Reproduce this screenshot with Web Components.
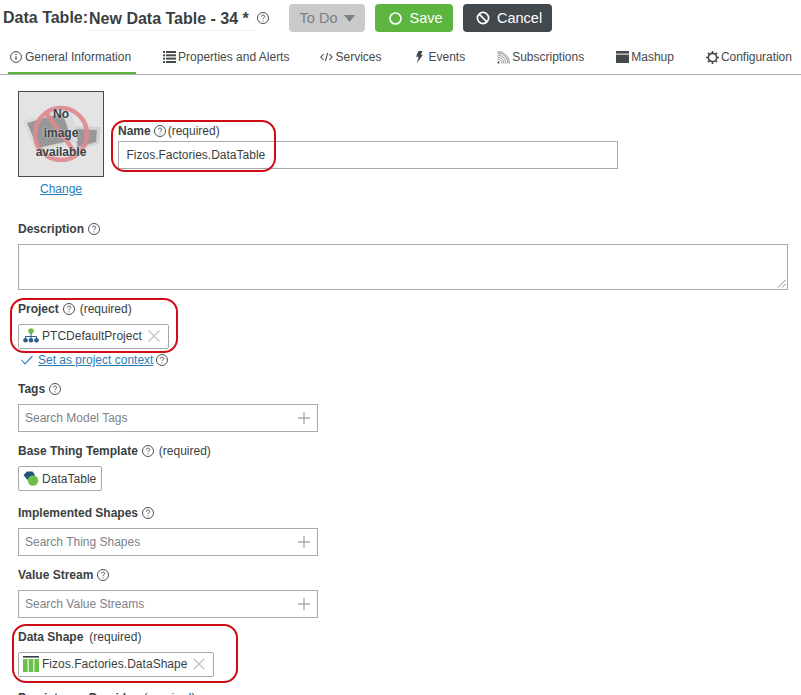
<!DOCTYPE html>
<html><head><meta charset="utf-8"><title>Data Table</title>
<style>
html,body{margin:0;padding:0;background:#fff;height:695px;overflow:hidden}
body{font:12px "Liberation Sans",Arial,sans-serif;color:#3a3f42}
</style></head><body>
<template id="t-help"><style>:host{display:inline-flex;vertical-align:middle}svg{display:block}</style>
<svg width="12" height="12" viewBox="0 0 12 12" fill="none" stroke="#4d5154" stroke-width="1"><circle cx="6" cy="6" r="5.500"/><path d="M4.300 4.600C4.400 3.600 5.100 3.100 6 3.100c1 0 1.700.6 1.700 1.400 0 .7-.4 1-1 1.400-.5.3-.7.6-.7 1.200"/><circle cx="6" cy="8.800" r=".6" fill="#4d5154" stroke="none"/></svg></template>

<x-page></x-page>

<script>
function def(name, html){
  customElements.define(name, class extends HTMLElement{
    constructor(){super();this.attachShadow({mode:'open'});}
    connectedCallback(){ if(this.shadowRoot.childNodes.length) return;
      this.shadowRoot.innerHTML = typeof html==='function'?html(this):html; }
  });
}
const ICONS={
 info:'<svg width="12" height="12" viewBox="0 0 12 12" fill="none" stroke="#44494c"><circle cx="6" cy="6" r="5.400"/><path d="M6 5.200v3.600" stroke-width="1.200"/><circle cx="6" cy="3.500" r=".7" fill="#44494c" stroke="none"/></svg>',
 list:'<svg width="13" height="12" viewBox="0 0 13 12" fill="#44494c"><rect x="0" y="0" width="2" height="2"/><rect x="3" y="0" width="10" height="2"/><rect x="0" y="3.300" width="2" height="2"/><rect x="3" y="3.300" width="10" height="2"/><rect x="0" y="6.600" width="2" height="2"/><rect x="3" y="6.600" width="10" height="2"/><rect x="0" y="10" width="2" height="2"/><rect x="3" y="10" width="10" height="2"/></svg>',
 code:'<svg width="13" height="10" viewBox="0 0 13 10" fill="none" stroke="#44494c" stroke-width="1.100"><path d="M3.600 2 .9 5l2.700 3M9.400 2l2.700 3-2.700 3M7.600 .8 5.400 9.200"/></svg>',
 bolt:'<svg width="7" height="12" viewBox="0 0 7 12" fill="#44494c"><path d="M2.400 0H6.600L4.800 3.800H7L1 12l1.600-6.200H0z"/></svg>',
 rss:'<svg width="13" height="13" viewBox="0 0 13 13" fill="none" stroke="#777" stroke-width=".8"><rect x=".5" y="10.500" width="2" height="2" fill="#555" stroke="none"/><path d="M.5 8a4.500 4.500 0 0 1 4.500 4.500M.5 6a6.500 6.500 0 0 1 6.500 6.500M.5 4a8.500 8.500 0 0 1 8.500 8.500M.5 2a10.500 10.500 0 0 1 10.500 10.500M.5 .5a12 12 0 0 1 12 12"/></svg>',
 mash:'<svg width="13" height="12" viewBox="0 0 13 12" fill="#44494c"><rect width="13" height="2.600"/><rect y="3.600" width="13" height="8.400"/></svg>',
 gear:'<svg width="13" height="13" viewBox="0 0 13 13" fill="none" stroke="#44494c"><circle cx="6.500" cy="6.500" r="4.200" stroke-width="1.700"/><path d="M6.500 0v2M6.500 11v2M0 6.500h2M11 6.500h2M1.900 1.900l1.400 1.400M9.700 9.700l1.400 1.400M1.900 11.100l1.400-1.400M9.700 3.300l1.400-1.400" stroke-width="1.600"/></svg>',
 project:'<svg width="16" height="15" viewBox="0 0 16 15"><circle cx="8" cy="3" r="2.800" fill="#6cc04a"/><path d="M8 5v3M2.500 11V8.500h11V11M8 8v3" fill="none" stroke="#2c5f8a"/><circle cx="2.500" cy="12.300" r="2.300" fill="#2c5f8a"/><circle cx="8" cy="12.300" r="2.300" fill="#2c5f8a"/><circle cx="13.500" cy="12.300" r="2.300" fill="#2c5f8a"/></svg>',
 table:'<svg width="16" height="15" viewBox="0 0 16 15"><path d="M4 .5h5.500L12 4 9 9 4 8.500 .5 4z" fill="#23527c"/><circle cx="10" cy="9.500" r="5.200" fill="#6cc04a"/></svg>',
 shape:'<svg width="16" height="16" viewBox="0 0 16 16"><rect width="16" height="1.600" fill="#3a3f42"/><rect y="3" width="4.600" height="13" fill="#6cc04a"/><rect x="5.700" y="3" width="4.600" height="13" fill="#6cc04a"/><rect x="11.400" y="3" width="4.600" height="13" fill="#6cc04a"/></svg>'
};
def('x-help', ()=>document.getElementById('t-help').innerHTML);
def('x-icon', h=>`<style>:host{display:inline-flex;align-items:center}svg{display:block}</style>${ICONS[h.getAttribute('name')]}`);

def('x-btn', h=>`<style>:host{display:inline-flex;align-items:center;justify-content:center;height:28px;box-sizing:border-box;border-radius:4px;font-size:14.500px;gap:var(--g,8px);width:var(--w);padding-left:var(--p,0);background:var(--bg);color:var(--fg)}</style><slot name="i"></slot><slot></slot>`);

def('x-header', `<style>:host{display:flex;align-items:center;height:28px;padding:4px 0 0 3px}
.k{font-size:16px;font-weight:700;color:#3a3f42}
.v{font-size:16px;font-weight:700;color:#3a3f42;width:167px;margin-left:1px;height:26px;line-height:28px;box-sizing:border-box;border-bottom:1px solid #eee;white-space:nowrap}
x-help{margin-left:1px}
.b{display:flex;gap:10px;margin-left:20px}
</style><span class="k">Data Table:</span><span class="v">New Data Table - 34 *</span><x-help></x-help>
<div class="b">
<x-btn style="--w:76px;--bg:#cacaca;--fg:#7c7f81;--g:6px">To Do<svg slot="i" style="order:2" width="11" height="7" viewBox="0 0 11 7" fill="#7c7f81"><path d="M0 0h11L5.500 7z"/></svg></x-btn>
<x-btn style="--w:78px;--bg:#5bb53e;--fg:#fff;--p:3px"><svg slot="i" width="13" height="13" viewBox="0 0 13 13" fill="none" stroke="#fff" stroke-width="1.700"><circle cx="6.500" cy="6.500" r="5.500"/></svg>Save</x-btn>
<x-btn style="--w:89px;--bg:#42484c;--fg:#fff;--p:3px;--g:7px"><svg slot="i" width="14" height="14" viewBox="0 0 15 15" fill="none" stroke="#fff" stroke-width="1.800"><circle cx="7.500" cy="7.500" r="6"/><path d="M3.400 3.400l8.200 8.200"/></svg>Cancel</x-btn>
</div>`);

def('x-tab', h=>`<style>:host{display:flex;align-items:center;gap:var(--g,3px);height:32px;box-sizing:border-box;padding:0 5px 2px 2px;font-size:12px;color:#44494c;white-space:nowrap;margin-left:var(--m,25px)}
:host([active]){box-shadow:inset 0 -2px 0 #5bb53e;margin-left:8px}</style><x-icon name="${h.getAttribute('icon')}"></x-icon><slot></slot>`);
def('x-tabs', `<style>:host{display:flex;margin-top:10px;height:32px;border-bottom:1px solid #a9a9a9;box-sizing:content-box;margin-bottom:0}</style><slot></slot>`);

def('x-noimage', `<style>:host{display:block;width:86px}
.box{position:relative;box-sizing:border-box;width:86px;height:86px;border:1px solid #4a4a4a;background:#e4e4e4;overflow:hidden}
svg{position:absolute;inset:0;filter:blur(.5px)}
.t{position:absolute;inset:0;display:flex;flex-direction:column;align-items:center;justify-content:center;font-weight:700;font-size:12px;line-height:19px;color:#3a3f42;text-shadow:0 0 2px #f4f4f4;padding-bottom:1px;box-sizing:border-box}
a{display:block;text-align:center;color:#2b7cb3;text-decoration:underline;font-size:12px;margin-top:5px;line-height:14px}
</style><div class="box"><svg width="84" height="84" viewBox="0 0 84 84">
<path d="M52 34 82 35 80 52 58 58z" fill="#d2d2d2"/><path d="M55 37 78 38 77 50 59 55z" fill="#989898"/>
<path d="M4 29 45 17 58 50 17 60z" fill="#dadada"/><path d="M8 31 43 21 54 48 19 56z" fill="#979797"/>
<path d="M46 24 53 22 59 49 52 50z" fill="#dadada"/>
<circle cx="42" cy="42" r="26" fill="none" stroke="#dd8b8e" stroke-width="4.500" opacity=".92"/><path d="M27 21 58 63" stroke="#dd8b8e" stroke-width="4.500" opacity=".92"/>
</svg><div class="t"><span>No</span><span>image</span><span>available</span></div></div><a>Change</a>`);

def('x-label', h=>`<style>:host{display:flex;align-items:center;height:16px;font-size:12px;line-height:16px;color:#3a3f42;gap:var(--g,4px);white-space:nowrap}
b{font-weight:700}.r{margin-left:var(--r,1px)}</style><b>${h.getAttribute('text')}</b>${h.hasAttribute('nohelp')?'':'<x-help></x-help>'}${h.hasAttribute('req')?'<span class="r">(required)</span>':''}`);

def('x-field', h=>`<style>:host{display:block;margin-top:var(--mt,11px)}x-label{margin-bottom:var(--lm,7px)}</style>
<x-label text="${h.getAttribute('label')}" ${h.hasAttribute('req')?'req':''} ${h.hasAttribute('nohelp')?'nohelp':''}></x-label><slot></slot>`);

def('x-input', h=>`<style>:host{display:flex;align-items:center;box-sizing:border-box;height:28px;width:var(--w,300px);border:1px solid #a9a9a9;padding:0 7px 0 6px;font-size:12px;background:#fff}
.ph{color:#7e8285;flex:1}.val{color:#3a3f42;flex:1;padding-left:1.500px}
svg{display:block}</style>${h.hasAttribute('placeholder')?`<span class="ph">${h.getAttribute('placeholder')}</span><svg width="12" height="12" viewBox="0 0 12 12" stroke="#a9a9a9" stroke-width="1.300"><path d="M6 0v12M0 6h12"/></svg>`:`<span class="val">${h.getAttribute('value')||''}</span>`}`);

def('x-textarea', `<style>:host{display:block;position:relative;box-sizing:border-box;height:46px;width:770px;border:1px solid #a9a9a9;background:#fff}
svg{position:absolute;right:1px;bottom:1px}</style><svg width="9" height="9" viewBox="0 0 9 9" stroke="#8a8a8a" fill="none"><path d="M8.500 1 1 8.500M8.500 5 5 8.500"/></svg>`);

def('x-chip', h=>`<style>:host{display:inline-flex;align-items:center;box-sizing:border-box;height:25px;border:1px solid #a9a9a9;border-radius:2px;padding:0 5px 0 4px;gap:3px;font-size:12px;color:#3a3f42;background:#fff;vertical-align:top;white-space:nowrap;letter-spacing:.03px}
:host([close]){padding-bottom:2px}
svg{display:block;margin:0 3px}</style><x-icon name="${h.getAttribute('icon')}"></x-icon><slot></slot>${h.hasAttribute('close')?'<svg width="12" height="12" viewBox="0 0 12 12" stroke="#c6c6c6" stroke-width="1.400"><path d="M.5 .5l11 11M11.500 .5l-11 11"/></svg>':''}`);

def('x-ring', `<style>:host{display:block;position:relative}
.r{position:absolute;top:var(--t);left:var(--l);width:var(--rw);height:var(--rh);box-sizing:border-box;border:2px solid #cf0d17;border-radius:14px;pointer-events:none}
</style><slot></slot><div class="r"></div>`);

def('x-context', `<style>:host{display:flex;align-items:center;height:14px;margin-top:4px;padding-left:3px;gap:5px;font-size:12px}
a{color:#2b7cb3;text-decoration:underline}
x-help{margin-left:-2px}</style><svg width="12" height="10" viewBox="0 0 12 10" fill="none" stroke="#2b7cb3" stroke-width="1.100"><path d="M.5 5l3.500 4 7.500-8"/></svg><a>Set as project context</a><x-help></x-help>`);

def('x-page', `<style>:host{display:block;color:#3a3f42}
.top{display:flex;padding:16px 0 0 18px}
.name{margin-left:14px;margin-top:32px;--mt:0}
.form{padding-left:18px}
</style>
<x-header></x-header>
<x-tabs>
<x-tab active icon="info">General Information</x-tab>
<x-tab icon="list" style="--g:2px">Properties and Alerts</x-tab>
<x-tab icon="code" style="--g:2px;--m:24px">Services</x-tab>
<x-tab icon="bolt" style="--g:5px;--m:28px">Events</x-tab>
<x-tab icon="rss" style="--g:2px">Subscriptions</x-tab>
<x-tab icon="mash" style="--g:2px">Mashup</x-tab>
<x-tab icon="gear" style="--g:2px;--m:25px;letter-spacing:-.03px">Configuration</x-tab>
</x-tabs>
<div class="top"><x-noimage></x-noimage>
<x-ring class="name" style="--t:-3px;--l:-7px;--rw:165px;--rh:52px"><x-field label="Name" req style="--g:3px;--r:-1px;--lm:2px"><x-input value="Fizos.Factories.DataTable" style="--w:500px"></x-input></x-field></x-ring></div>
<div class="form">
<x-field label="Description" style="--mt:25px"><x-textarea></x-textarea></x-field>
<x-ring style="--t:-3px;--l:-8px;--rw:168px;--rh:55px"><x-field label="Project" req><x-chip icon="project" close>PTCDefaultProject</x-chip></x-field></x-ring>
<x-context></x-context>
<x-field label="Tags" style="--mt:14px"><x-input placeholder="Search Model Tags"></x-input></x-field>
<x-field label="Base Thing Template" req><x-chip icon="table">DataTable</x-chip></x-field>
<x-field label="Implemented Shapes" style="--mt:14px"><x-input placeholder="Search Thing Shapes"></x-input></x-field>
<x-field label="Value Stream"><x-input placeholder="Search Value Streams"></x-input></x-field>
<x-ring style="--t:-5px;--l:-6px;--rw:226px;--rh:59px;--r:2px"><x-field label="Data Shape" req nohelp><x-chip icon="shape" close>Fizos.Factories.DataShape</x-chip></x-field></x-ring>
<x-field label="Persistence Provider" req nohelp style="--mt:13px;--r:2px"></x-field>
</div>`);
</script>
</body></html>
